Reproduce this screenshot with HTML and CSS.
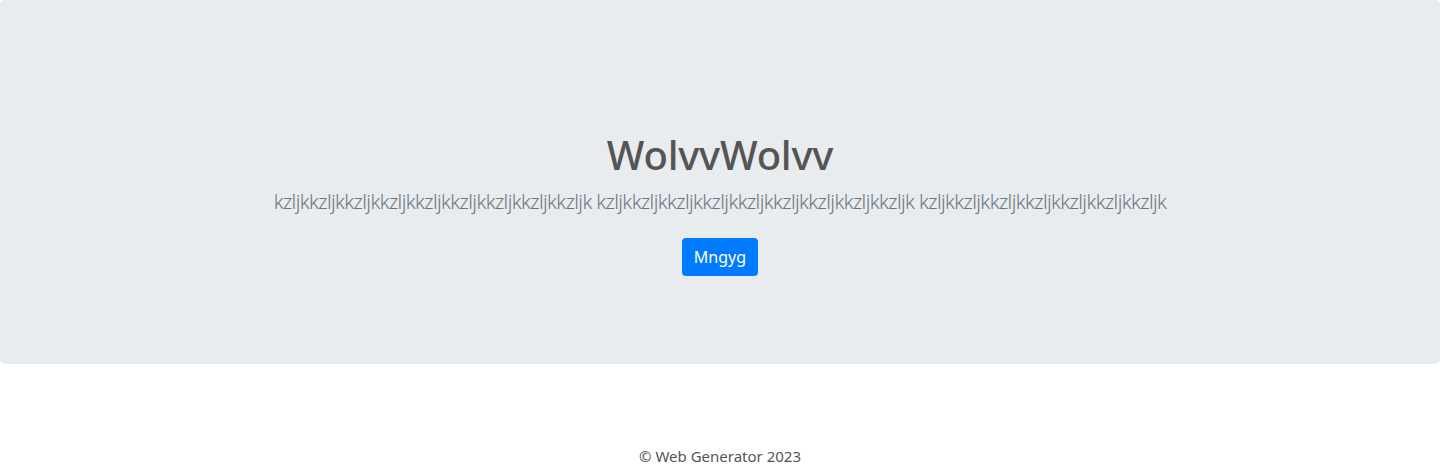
FILE: index.html
```html
<!DOCTYPE html>
<html lang="en">
<head>
<meta charset="utf-8">
<title>WolvvWolvv</title>
<link rel="stylesheet" href="styles.css">
</head>
<body>
<main class="hero">
  <div class="hero-content">
    <h1 class="hero-title">WolvvWolvv</h1>
    <p class="hero-lead">kzljkkzljkkzljkkzljkkzljkkzljkkzljkkzljkkzljk kzljkkzljkkzljkkzljkkzljkkzljkkzljkkzljkkzljk kzljkkzljkkzljkkzljkkzljkkzljkkzljk</p>
    <a class="btn-primary" href="#">Mngyg</a>
  </div>
</main>
<footer class="footer">
  <p class="footer-text">© Web Generator 2023</p>
</footer>
</body>
</html>
```

FILE: styles.css
```css
* { box-sizing: border-box; }
html, body { margin: 0; padding: 0; }
body {
  font-family: "Noto Sans", "Open Sans", sans-serif;
  color: #555;
  background: #fff;
}
.hero {
  background: #e9ecef;
  height: 364px;
  border-radius: 5px;
  display: flex;
  align-items: center;
  justify-content: center;
  text-align: center;
}
.hero-content {
  display: flex;
  flex-direction: column;
  align-items: center;
  padding-top: 43px;
}
.hero-title {
  margin: 0 0 8px;
  font-size: 40px;
  font-weight: 500;
  line-height: 1.2;
  letter-spacing: -0.2px;
  color: #555;
}
.hero-lead {
  margin: 0 0 21px;
  font-size: 20px;
  font-weight: 300;
  line-height: 1.5;
  letter-spacing: -0.6px;
  color: #6c757d;
}
.btn-primary {
  display: inline-block;
  background: #007bff;
  color: #fff;
  text-decoration: none;
  font-size: 16px;
  line-height: 24px;
  padding: 7px 12px;
  border-radius: 4px;
}
.footer {
  display: flex;
  justify-content: center;
  padding-top: 80px;
}
.footer-text {
  margin: 0;
  font-size: 15px;
  line-height: 24px;
  color: #555;
}
```
